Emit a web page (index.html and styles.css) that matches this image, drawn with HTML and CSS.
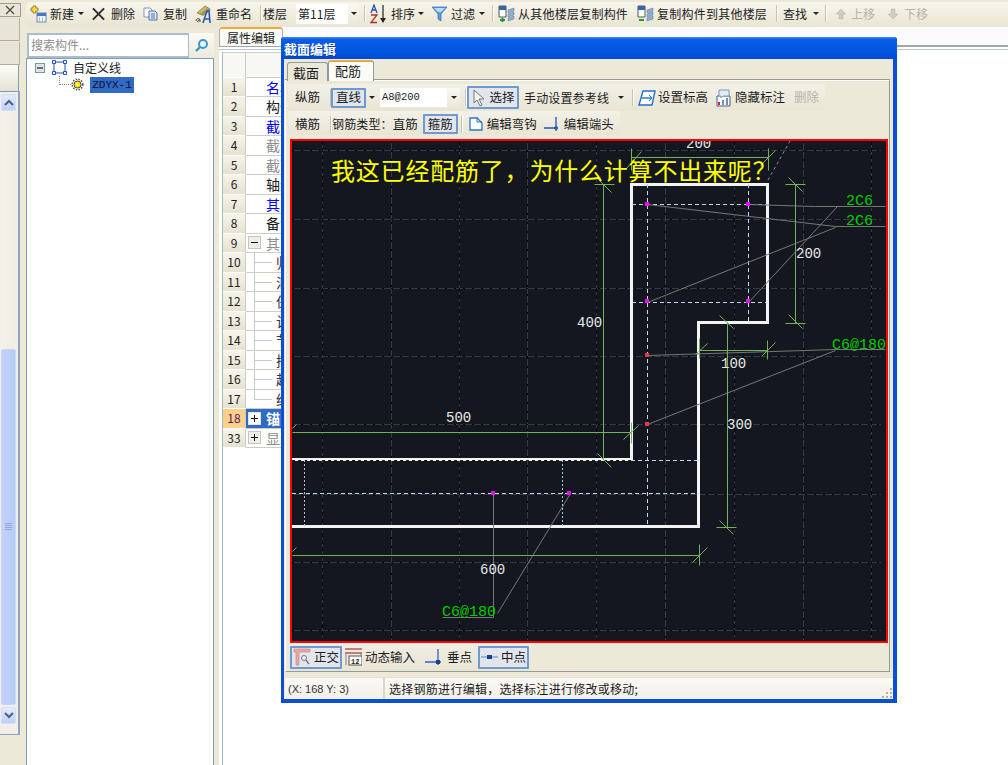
FILE: index.html
```html
<!DOCTYPE html>
<html lang="zh-CN">
<head>
<meta charset="utf-8">
<title>截面编辑</title>
<link rel="stylesheet" href="styles.css">
</head>
<body>
<div class="app">
  <aside class="rail">
    <div class="close-tile"><svg width="10" height="10" viewBox="0 0 10 10"><path d="M1 1l8 8M9 1l-8 8" stroke="#444" stroke-width="1.1"/></svg></div>
    <div class="rail-tile"></div>
    <div class="rail-tile"></div>
    <div class="rail-head"></div>
    <div class="rail-list">
      <div class="sb-btn"><svg width="10" height="7" viewBox="0 0 10 7"><path d="M1 6l4-4 4 4" fill="none" stroke="#4d6185" stroke-width="2"/></svg></div>
      <div class="sb-track">
        <div class="sb-thumb"><svg width="7" height="8" viewBox="0 0 7 8"><path d="M0 .5h7M0 2.5h7M0 4.5h7M0 6.5h7" stroke="#8fa8e0"/></svg></div>
      </div>
      <div class="sb-btn"><svg width="10" height="7" viewBox="0 0 10 7"><path d="M1 1l4 4 4-4" fill="none" stroke="#4d6185" stroke-width="2"/></svg></div>
    </div>
  </aside>

  <main class="main">
    <div class="toolbar">
      <svg class="ic m0" width="17" height="18" viewBox="0 0 17 18"><path d="M3 1h3v2h2v3H6v2H3V6H1V3h2z" fill="#f6d84a" stroke="#8c7420" stroke-width=".8"/><rect x="7" y="8" width="9" height="9" fill="#eef3fb" stroke="#6d88b8"/><rect x="7" y="8" width="9" height="3" fill="#4b78c0"/><path d="M9 13h1M12 13h1M9 15h1M12 15h1" stroke="#7a8aa8"/></svg>
      <span class="m3">新建</span><i class="caret m4"></i>
      <svg class="ic m8" width="13" height="14" viewBox="0 0 14 14"><path d="M1 1l12 12M13 1L1 13" stroke="#2b2b2b" stroke-width="2.1"/></svg>
      <span class="m6">删除</span>
      <svg class="ic m8" width="15" height="14" viewBox="0 0 15 14"><path d="M1 1h6l2 2v7H1z" fill="#fff" stroke="#7e93b8"/><path d="M6 4h6l2 2v7H6z" fill="#dfe9f8" stroke="#4f73ad"/><path d="M8 7h4M8 9h4M8 11h4" stroke="#4f73ad"/></svg>
      <span class="m5">复制</span>
      <svg class="ic m8" width="18" height="20" viewBox="0 0 18 20"><path d="M2 9l8-7 5 3-8 6z" fill="#d8b45c" stroke="#7d6a36" stroke-width=".7"/><path d="M5 10l8-6 3 2-8 6z" fill="#8a9a70"/><path d="M1 17c0-3 4-3 4-1v2M5 16c-2-.5-3.500 2-1.500 2" fill="none" stroke="#444"/><path d="M8 19l4-12h2l1 12M10 15h4" fill="none" stroke="#2a55b0" stroke-width="1.600"/></svg>
      <span class="m3">重命名</span>
      <i class="sep m8"></i>
      <span class="m2">楼层</span>
      <div class="combo combo-floor"><span class="combo-val">第11层</span><span class="drop"><i class="caret"></i></span></div>
      <i class="sep m5"></i>
      <svg class="ic m5" width="18" height="20" viewBox="0 0 18 20"><path d="M1 9l3-8 3 8M2.500 6h3" fill="none" stroke="#2a55b0" stroke-width="1.300"/><path d="M1 11h6L1 18.500h6" fill="none" stroke="#b03030" stroke-width="1.300"/><path d="M13 1v15" stroke="#222" stroke-width="1.2"/><path d="M10 14l3 5 3-5z" fill="#222"/></svg>
      <span class="m3">排序</span><i class="caret m3"></i>
      <svg class="ic m8" width="15" height="15" viewBox="0 0 15 15"><path d="M0 1h15L9 8v7l-3-2V8z" fill="#5b9be0" stroke="#3269ad" stroke-width=".7"/><path d="M2 2h11L9 6H6z" fill="#bcdcf8"/></svg>
      <span class="m4">过滤</span><i class="caret m4"></i>
      <i class="sep m7"></i>
      <svg class="ic m5" width="17" height="18" viewBox="0 0 17 18"><path d="M1 1h7v11H1z" fill="#fff" stroke="#555"/><rect x="1" y="1" width="7" height="4" fill="#3a64a8"/><path d="M10 5l6-2v3l-6 2zM10 9l6-2v3l-6 2zM10 13l6-2v3l-6 2z" fill="#8fb0cf" stroke="#5b7b9c" stroke-width=".5"/><path d="M2 15h5M4.500 13v4" stroke="#1e9a35" stroke-width="2"/></svg>
      <span class="m3 wide">从其他楼层复制构件</span>
      <svg class="ic m9" width="17" height="18" viewBox="0 0 17 18"><path d="M1 1h7v11H1z" fill="#fff" stroke="#555"/><rect x="1" y="1" width="7" height="4" fill="#3a64a8"/><path d="M10 5l6-2v3l-6 2zM10 9l6-2v3l-6 2zM10 13l6-2v3l-6 2z" fill="#8fb0cf" stroke="#5b7b9c" stroke-width=".5"/><path d="M2 15h5" stroke="#1e9a35" stroke-width="2"/></svg>
      <span class="m3 wide">复制构件到其他楼层</span>
      <i class="sep m9"></i>
      <span class="m6">查找</span><i class="caret m6"></i>
      <i class="sep m6"></i>
      <svg class="ic m9" width="12" height="12" viewBox="0 0 12 12"><path d="M6 1l5 5H8v5H4V6H1z" fill="#cfcdc2" stroke="#bdbbb0" stroke-width=".6"/></svg>
      <span class="m4 muted">上移</span>
      <svg class="ic m12" width="12" height="12" viewBox="0 0 12 12"><path d="M6 11L1 6h3V1h4v5h3z" fill="#cfcdc2" stroke="#bdbbb0" stroke-width=".6"/></svg>
      <span class="m5 muted">下移</span>
    </div>

    <div class="workspace">
      <section class="nav">
        <div class="search">
          <div class="search-input">搜索构件...</div>
          <div class="search-btn"><svg width="15" height="15" viewBox="0 0 15 15"><circle cx="9" cy="6" r="4" fill="#e6f4fb" stroke="#3d94cc" stroke-width="2"/><path d="M6 9l-4 4" stroke="#3d94cc" stroke-width="2.400"/></svg></div>
        </div>
        <div class="tree">
          <div class="tree-row">
            <svg class="tree-box" width="10" height="10" viewBox="0 0 10 10"><rect x=".5" y=".5" width="9" height="9" fill="#dfe3e6" stroke="#8095a8"/><path d="M2 5h6" stroke="#223" stroke-width="1.200"/></svg>
            <svg class="tree-ic" width="15" height="15" viewBox="0 0 15 15"><rect x="2" y="2" width="11" height="11" fill="none" stroke="#1b50c0"/><path d="M.5.500h3v3h-3zM11.500.500h3v3h-3zM.5 11.500h3v3h-3zM11.500 11.500h3v3h-3z" fill="#fff" stroke="#1b50c0"/></svg>
            <span class="tree-label">自定义线</span>
          </div>
          <div class="tree-row tree-child">
            <i class="tree-hook"></i>
            <svg class="tree-gear" width="13" height="13" viewBox="0 0 13 13"><circle cx="6.500" cy="6.500" r="3.500" fill="#ffe900" stroke="#444"/><circle cx="6.500" cy="6.500" r="5.300" fill="none" stroke="#555" stroke-width="1.600" stroke-dasharray="1.500 1.300"/><circle cx="6.500" cy="6.500" r="1.300" fill="#fff7a0"/></svg>
            <span class="tree-sel">ZDYX-1</span>
          </div>
        </div>
      </section>

      <section class="props">
        <div class="tabstrip"><div class="prop-tab">属性编辑</div></div>
        <div class="grid">
          <div class="gh top"></div><div class="gc top"></div>
          <div class="gh">1</div><div class="gc blue">名称</div>
          <div class="gh">2</div><div class="gc">构件</div>
          <div class="gh">3</div><div class="gc blue">截面</div>
          <div class="gh">4</div><div class="gc gray">截面</div>
          <div class="gh">5</div><div class="gc gray">截面</div>
          <div class="gh">6</div><div class="gc">轴线</div>
          <div class="gh">7</div><div class="gc blue">其它</div>
          <div class="gh">8</div><div class="gc">备注</div>
          <div class="gh">9</div><div class="gc gray boxed"><i class="pm minus"></i><span class="pm-t">其它</span></div>
          <div class="gh">10</div><div class="gc kid">归</div>
          <div class="gh">11</div><div class="gc kid">汇</div>
          <div class="gh">12</div><div class="gc kid">保</div>
          <div class="gh">13</div><div class="gc kid">计</div>
          <div class="gh">14</div><div class="gc kid">节</div>
          <div class="gh">15</div><div class="gc kid">搭</div>
          <div class="gh">16</div><div class="gc kid">起</div>
          <div class="gh">17</div><div class="gc kid last">终</div>
          <div class="gh hot">18</div><div class="gc sel boxed"><i class="pm plus"></i><span class="pm-t">锚固</span></div>
          <div class="gh">33</div><div class="gc gray boxed"><i class="pm plus"></i><span class="pm-t">显示</span></div>
        </div>
      </section>
    </div>
  </main>
</div>

<div class="dialog">
  <div class="titlebar">截面编辑</div>
  <div class="tabs">
    <div class="tab">截面</div>
    <div class="tab active">配筋</div>
  </div>
  <div class="panel">
    <div class="dbar bar1">
      <span class="m7">纵筋</span>
      <i class="sep m10"></i>
      <span class="press btn-line">直线</span><i class="caret m3"></i>
      <div class="combo combo-rebar"><span class="mono-val">A8@200</span><span class="drop"><i class="caret"></i></span></div>
      <i class="sep m5"></i>
      <span class="press btn-select m1"><svg class="ic" width="14" height="18" viewBox="0 0 14 18"><path d="M2 1v13l3-3 3 6 2-1-3-6h5z" fill="#f4f4f4" stroke="#777"/></svg><span class="m4">选择</span></span>
      <span class="m5 tight">手动设置参考线</span><i class="caret m9"></i>
      <i class="sep m8"></i>
      <svg class="ic m5" width="18" height="16" viewBox="0 0 18 16"><path d="M5 1h12l-3 14H1z" fill="#fff" stroke="#1f6fd0" stroke-width="1.400"/><path d="M4 8h9" stroke="#1f6fd0" stroke-width="1.400"/><path d="M11 5l3 3-3 3" fill="none" stroke="#1f6fd0"/></svg>
      <span class="m2">设置标高</span>
      <svg class="ic m8" width="15" height="18" viewBox="0 0 15 18"><path d="M1 7h13v10H1z" fill="#fff" stroke="#3c5f95"/><path d="M3 1h10v6H7L5 9V7H3z" fill="#e3ecf7" stroke="#7d97bd"/><path d="M3 16v-3" stroke="#d22" stroke-width="2"/><path d="M7 16v-5M11 16V9" stroke="#3c5f95" stroke-width="1.400"/></svg>
      <span class="m4">隐藏标注</span>
      <span class="m9 muted">删除</span>
    </div>
    <div class="dbar bar2">
      <span class="m7">横筋</span>
      <i class="sep m10"></i>
      <span class="m1 tight">钢筋类型：</span>
      <span class="m0">直筋</span>
      <span class="press btn-hoop m5">箍筋</span>
      <i class="sep m3"></i>
      <svg class="ic m6" width="16" height="16" viewBox="0 0 16 16"><path d="M2 2h7l5 5v7H2z" fill="#fff" stroke="#2e73c9" stroke-width="1.300"/><path d="M9 1v5h5" fill="none" stroke="#2e73c9"/></svg>
      <span class="m3">编辑弯钩</span>
      <svg class="ic m7" width="16" height="16" viewBox="0 0 16 16"><path d="M0 12h14" stroke="#1f56b8" stroke-width="1.500"/><path d="M12 1v14" stroke="#1f56b8" stroke-width="1.300"/><rect x="10.500" y="10.500" width="3" height="3" fill="#1f56b8"/></svg>
      <span class="m4">编辑端头</span>
    </div>

    <div class="cad">
      <svg class="cad-svg" width="594" height="500" viewBox="292 141 594 500">
        <g class="g-base">
          <path d="M292 150H881M292 219H881M292 288H881M292 356H881M292 424H881M292 494H881M292 562H881M292 630H881"/>
          <path d="M322 141V640M391 141V640M459 141V640M527 141V640M596 141V640M665 141V640M734 141V640M803 141V640M871 141V640"/>
        </g>
        <g class="g-dash">
          <path d="M292 150H881M292 219H881M292 288H881M292 356H881M292 424H881M292 494H881M292 562H881M292 630H881"/>
          <path d="M391 141V640M527 141V640M665 141V640M803 141V640"/>
        </g>
        <g class="g-dash2">
          <path d="M322 141V640M459 141V640M596 141V640M734 141V640M871 141V640"/>
        </g>

        <path class="shape" d="M292 526.500H698.500V322.500H767V184.500H631.500V459.500H292"/>
        <path class="shape-dash" d="M292 460H631"/>

        <path class="rebar" d="M647 184V527M748 184V322M632 204H767M632 302H767M631 460H699M292 493H699"/>
        <path class="rebar-dk" d="M304 460V527M562 460V527"/>

        <path class="lead" d="M647 204L835 226H885M748 204L815 206H885M647 302L835 227M748 302L837 206M647 355L835 349H885M647 424L835 350M493 493V617H442M570 493L497 613"/>

        <g class="dim">
          <path d="M631 157H768M631 148V170M626 168L641 151M768 148V170M760 165L775 150"/>
          <path d="M795 184V323M785 184H805M788 177L802 191M785 323H805M788 314L802 328"/>
          <path d="M603 184V460M594 184H614M596 177L611 192M597 453L611 467"/>
          <path d="M292 432H631M631 422V443M623 439L638 425M292 428L296 424"/>
          <path d="M699 350H767M699 338V358M695 354L707 343M767 340V359M761 356L775 342"/>
          <path d="M727 322V527M719 315L733 328M716 527H736M719 520L733 534"/>
          <path d="M292 555H699M699 544V565M692 562L707 547M292 551L296 547"/>
        </g>
        <path class="dash-grey" d="M768 180L790 141"/>

        <g class="sq-m">
          <rect x="645" y="202" width="4" height="4"/><rect x="746" y="202" width="4" height="4"/>
          <rect x="645" y="299" width="4" height="4"/><rect x="746" y="299" width="4" height="4"/>
          <rect x="491" y="491" width="4" height="4"/><rect x="567" y="491" width="4" height="4"/>
        </g>
        <g class="sq-r"><rect x="645" y="353" width="4" height="4"/><rect x="645" y="422" width="4" height="4"/></g>

        <text class="q" x="331" y="180">我这已经配筋了，为什么计算不出来呢？</text>
        <text class="num" x="686" y="148">200</text>
        <text class="num" x="796" y="258">200</text>
        <text class="num" x="577" y="327">400</text>
        <text class="num" x="721" y="368">100</text>
        <text class="num" x="727" y="429">300</text>
        <text class="num" x="446" y="422">500</text>
        <text class="num" x="480" y="574">600</text>
        <text class="lbl" x="846" y="205">2C6</text>
        <text class="lbl" x="846" y="225">2C6</text>
        <text class="lbl" x="832" y="349">C6@180</text>
        <text class="lbl" x="442" y="616">C6@180</text>
      </svg>
    </div>

    <div class="dbar bar3">
      <span class="press btn-ortho m1"><svg class="ic" width="18" height="18" viewBox="0 0 18 18"><path d="M1 1h16v3H6v13H3V4H1z" fill="#e8a8a0" stroke="#c98078" stroke-width=".6"/><circle cx="11" cy="10" r="2.500" fill="#eef" stroke="#778"/><path d="M13 12l3 4" stroke="#778" stroke-width="1.400"/></svg><span class="m3">正交</span></span>
      <svg class="ic m3" width="17" height="18" viewBox="0 0 17 18"><path d="M0 1h17M0 5h17" stroke="#b05a5a" stroke-width="1.300"/><path d="M1 5v12M16 5v3" stroke="#888"/><rect x="4" y="8" width="13" height="9" fill="#fff" stroke="#555"/><text x="6" y="16" class="ic-n">12</text></svg>
      <span class="m3">动态输入</span>
      <svg class="ic m10" width="17" height="18" viewBox="0 0 17 18"><path d="M0 14h16" stroke="#2a66c2" stroke-width="1.500"/><path d="M13 1v16" stroke="#2a66c2" stroke-width="1.300"/><rect x="11" y="12" width="4" height="4" fill="#1a3f96"/></svg>
      <span class="m5">垂点</span>
      <span class="press btn-mid m6"><svg class="ic" width="17" height="8" viewBox="0 0 17 8"><path d="M0 4h17" stroke="#6b9ad8" stroke-width="1.200"/><rect x="6" y="2" width="5" height="4" fill="#1a3f96"/></svg><span class="m3">中点</span></span>
    </div>
  </div>

  <div class="status">
    <div class="st-pos">(X: 168 Y: 3)</div>
    <div class="st-msg">选择钢筋进行编辑，选择标注进行修改或移动;</div>
    <svg class="grip" width="12" height="12" viewBox="0 0 12 12"><path d="M9 1h2v2H9zM5 5h2v2H5zM9 5h2v2H9zM1 9h2v2H1zM5 9h2v2H5zM9 9h2v2H9z" fill="#b5b2a3"/></svg>
  </div>
</div>
</body>
</html>
```
FILE: styles.css
```css
* { box-sizing: border-box; }
html, body { margin: 0; height: 100%; overflow: hidden; }
body {
  background: #ece9d8;
  color: #1c1c1c;
  font: 12px/1 "Noto Sans CJK SC", "Liberation Sans", sans-serif;
}
i { display: block; font-style: normal; }
svg { display: block; flex: none; }

.app { display: flex; height: 765px; }

/* margins between toolbar items */
.m0 { margin-left: 0; } .m1 { margin-left: 1px; } .m2 { margin-left: 2px; } .m3 { margin-left: 3px; }
.m4 { margin-left: 4px; } .m5 { margin-left: 5px; } .m6 { margin-left: 6px; } .m7 { margin-left: 7px; }
.m8 { margin-left: 8px; } .m9 { margin-left: 9px; } .m10 { margin-left: 10px; } .m12 { margin-left: 12px; }
.wide { letter-spacing: .22px; }
.muted { color: #b5b3a8; }
.caret { width: 0; height: 0; flex: none; border: 3px solid transparent; border-top: 3px solid #222; border-bottom: 0; }
.sep { width: 1px; height: 17px; flex: none; background: #c5c2b2; box-shadow: 1px 0 #fff; }

/* left rail */
.rail { width: 26px; flex: none; display: flex; flex-direction: column; padding: 3px 0 30px; }
.close-tile { width: 21px; height: 14px; border: 1px solid #a09e92; border-left: 0; background: #e9e6d8; display: flex; align-items: center; justify-content: center; }
.rail-tile { width: 20px; height: 23px; margin-top: 1px; background: #e8e5d6; border-right: 1px solid #b5b3a5; border-bottom: 1px solid #aeac9e; }
.rail-head { width: 19px; height: 26px; background: linear-gradient(#fdfcf8, #e6e3d6); border-right: 1px solid #8a9cb2; }
.rail-list { width: 20px; flex: 1; display: flex; flex-direction: column; padding: 2px 2px 10px 1px; background: #f1efe8; border-top: 1px solid #7f9db9; border-right: 2px solid #8ea5bd; border-bottom: 1px solid #8ea5bd; }
.sb-btn { width: 15px; height: 17px; flex: none; background: linear-gradient(#e3ebfd, #bdd0f8); border: 1px solid #d3def7; border-radius: 2px; display: flex; align-items: center; justify-content: center; }
.sb-track { flex: 1; display: flex; flex-direction: column; justify-content: flex-end; padding-bottom: 2px; background: linear-gradient(90deg, #f3f1ea, #efede4); }
.sb-thumb { height: 356px; width: 15px; background: linear-gradient(90deg, #c1d2f7, #b5cbf7); border: 1px solid #c8d7f8; border-radius: 2px; display: flex; align-items: center; justify-content: center; }

/* main area */
.main { flex: 1; min-width: 0; display: flex; flex-direction: column; }
.toolbar { height: 27px; flex: none; display: flex; align-items: center; padding: 0 0 2px 4px; background: linear-gradient(#f7f5ec, #e9e5d3); border-top: 2px solid #ece9d8; border-radius: 5px 0 0 5px; white-space: nowrap; }
.combo { display: flex; align-items: stretch; background: #fff; flex: none; }
.combo-floor { width: 63px; height: 20px; margin-left: 9px; }
.combo-val { flex: 1; padding: 4px 0 0 2px; }
.drop { width: 11px; flex: none; display: flex; align-items: center; justify-content: center; background: linear-gradient(#f9f8f1, #ebe8da); }

.workspace { flex: 1; min-height: 0; display: flex; }
.nav { width: 188px; flex: none; display: flex; flex-direction: column; padding-top: 6px; }
.search { height: 25px; flex: none; display: flex; }
.search-input { width: 162px; margin-left: 1px; padding: 3px 0 0 2px; background: #fff; border: 2px solid #a9bdcf; border-right-width: 1px; color: #8d8d8d; font-size: 12px; line-height: 14px; }
.search-btn { flex: 1; display: flex; align-items: center; justify-content: center; background: linear-gradient(#fafaf5, #ece9dc); }
.tree { flex: 1; background: #fff; border: 1px solid #7f9db9; border-bottom: 0; }
.tree-row { height: 17px; display: flex; align-items: center; position: relative; }
.tree-box { margin-left: 8px; }
.tree-ic { margin-left: 7px; }
.tree-label { margin-left: 6px; font-size: 12px; }
.tree-child { height: 17px; }
.tree-hook { margin-left: 32px; width: 12px; height: 9px; margin-top: -9px; border-left: 1px dotted #888; border-bottom: 1px dotted #888; }
.tree-sel { margin-left: 6px; width: 44px; height: 16px; padding-top: 3px; text-align: center; background: #316ac5; color: #0b1030; font: 11px/1 "Liberation Mono", monospace; }

.props { flex: 1; margin-left: 5px; min-width: 0; display: flex; flex-direction: column; background: #fff; }
.tabstrip { height: 20px; flex: none; display: flex; background: #fbfbfe; border-bottom: 2px solid #9ea8ad; box-shadow: 0 2px 0 #fff, 0 3px 0 #b7c2c9; }
.prop-tab { width: 64px; height: 19px; padding-top: 3px; text-align: center; background: #fbfbf8; border: 1px solid #a5b0b8; border-top: 2px solid #f0a43c; border-bottom: 0; border-radius: 3px 3px 0 0; }
.grid { flex: 1; width: 90px; margin: 5px 0 0 3px; display: grid; grid-template-columns: 23px 1fr; grid-template-rows: 25.500px repeat(19, 19.500px); align-content: start; border-left: 1px solid #a7b6c2; }
.gh { background: linear-gradient(#f6f4ea, #e6e2d1); border-right: 1px solid #cfcdc2; border-bottom: 1px solid #fff; display: flex; align-items: center; justify-content: center; font-size: 12px; color: #222; }
.gh.top, .gc.top { background: #f8f8f3; border-top: 1px solid #c9ced2; }
.gc { border-bottom: 1px solid #cfcdc2; display: flex; align-items: center; padding-left: 20px; overflow: hidden; font-size: 14px; white-space: nowrap; position: relative; color: #1c1c1c; }
.gc.blue { color: #0000f0; }
.gc.gray { color: #8d8d8d; }
.gc.boxed { padding-left: 2px; }
.gh.hot { background: #fbd08a; color: #5a1560; }
.gc.sel { background: #316ac5; color: #fff; font-weight: 700; }
.pm { width: 13px; height: 13px; flex: none; background: #f0efe8; border: 1px solid #c6c6c0; position: relative; }
.sel .pm { background: #fff; border-color: #dfe5f2; }
.pm::before { content: ""; position: absolute; left: 2px; right: 2px; top: 5px; height: 1px; background: #111; }
.plus::after { content: ""; position: absolute; top: 2px; bottom: 2px; left: 5px; width: 1px; background: #111; }
.pm-t { margin-left: 5px; }
.gc.kid { padding-left: 30px; color: #333; }
.kid::before { content: ""; position: absolute; left: 8px; top: 0; bottom: 0; width: 1px; background: #c8c8c8; }
.kid.last::before { bottom: 50%; }
.kid::after { content: ""; position: absolute; left: 8px; width: 18px; top: 50%; height: 1px; background: #c8c8c8; }

/* dialog window */
.dialog { position: absolute; left: 281px; top: 37px; width: 616px; height: 666px; background: #ece9d8; border: solid #0a4fd8; border-width: 0 4px 4px 3px; border-radius: 3px 3px 0 0; display: flex; flex-direction: column; }
.titlebar { height: 22px; flex: none; margin: 0 -4px 0 -3px; padding: 5px 0 0 3px; border-radius: 3px 3px 0 0; background: linear-gradient(180deg, #3d8cf0 0, #0a5ce6 12%, #0056e0 70%, #0048d0 100%); color: #fff; font-size: 13px; font-weight: 700; text-shadow: 1px 1px 0 #0a3fa8; }
.tabs { height: 21px; flex: none; margin: 1px 0 -1px 3px; display: flex; align-items: flex-end; position: relative; z-index: 1; }
.tab { width: 41px; height: 19px; padding: 3px 0 0 5px; font-size: 13px; background: #ebe8da; border: 1px solid #919b9c; border-bottom: 0; border-radius: 3px 3px 0 0; }
.tab.active { width: 46px; height: 21px; background: #fbfbf8; border-top: 2px solid #f0a43c; padding: 2px 0 0 6px; }
.panel { height: 592px; flex: none; margin: 0 3px 0 1px; padding: 3px 0 0 2px; border: 1px solid #919b9c; border-color: #fff #919b9c #919b9c #fff; box-shadow: 0 -1px 0 #919b9c; display: flex; flex-direction: column; }
.dbar { display: flex; align-items: center; flex: none; white-space: nowrap; font-size: 12.500px; }
.tight { font-size: 12px; letter-spacing: .15px; }
.bar1 { height: 27px; width: 537px; background: linear-gradient(#f3f1e7, #e8e5d4); border-radius: 3px; }
.bar2 { height: 24px; width: 332px; padding-top: 2px; background: linear-gradient(#f3f1e7, #e8e5d4); border-radius: 3px; }
.bar3 { height: 28px; width: 243px; margin-left: 1px; background: linear-gradient(#f0eee2, #e8e5d4); }
.press { display: flex; align-items: center; justify-content: center; flex: none; background: #e2e6ec; border: 2px solid #6e9ad0; height: 20px; border-radius: 1px; }
.btn-line { width: 35px; }
.btn-select { width: 52px; height: 23px; }
.btn-hoop { width: 35px; }
.btn-ortho { width: 52px; height: 23px; }
.btn-mid { width: 51px; height: 23px; }
.combo-rebar { width: 80px; height: 19px; margin-left: 5px; }
.mono-val { flex: 1; padding: 4px 0 0 2px; font: 10.500px/1 "Liberation Mono", monospace; }
.combo-rebar .drop { width: 13px; }
.cad { width: 598px; height: 504px; flex: none; margin: 4px 0 0 2px; border: 2px solid #f00; background: #14171f; overflow: hidden; }
.cad-svg { shape-rendering: crispEdges; }
.g-base path { fill: none; stroke: #323b47; stroke-width: 1; }
.g-dash path { fill: none; stroke: #05060a; stroke-width: 1; stroke-dasharray: 2 7; }
.g-dash2 path { fill: none; stroke: #040508; stroke-width: 1; stroke-dasharray: 4 3; }
.shape { fill: none; stroke: #f4f4f4; stroke-width: 3; }
.shape-dash { fill: none; stroke: #222; stroke-width: 1; stroke-dasharray: 3 3; }
.rebar { fill: none; stroke: #bcd8f2; stroke-width: 1; stroke-dasharray: 4 3; }
.rebar-dk { fill: none; stroke: #a9c6e0; stroke-width: 1; stroke-dasharray: 2 2; }
.lead { fill: none; stroke: #777; stroke-width: 1; shape-rendering: geometricPrecision; transform: translate(.5px, .5px); }
.dim path { fill: none; stroke: #6fb35a; stroke-width: 1; shape-rendering: geometricPrecision; transform: translate(.5px, .5px); }
.dash-grey { fill: none; stroke: #8a8a8a; stroke-width: 1; stroke-dasharray: 3 3; shape-rendering: geometricPrecision; }
.sq-m rect { fill: #f0f; }
.sq-r rect { fill: #e8384f; }
.q { fill: #ff0; font: 24px "Noto Sans CJK SC", sans-serif; letter-spacing: .8px; }
.num { fill: #e8e8e8; font: 14px "Liberation Mono", monospace; }
.lbl { fill: #0c0; font: 15px "Liberation Mono", monospace; }
.ic-n { font: 700 7px "Liberation Mono", monospace; fill: #222; }

.status { height: 22px; flex: none; margin: 5px 0 0 1px; display: flex; align-items: center; background: linear-gradient(#fbfaf5, #f1efe6); border-top: 1px solid #e4e1d2; position: relative; }
.st-pos { width: 100px; height: 100%; flex: none; padding: 6px 0 0 3px; font: 11px/1 "Liberation Sans", sans-serif; color: #333; border-right: 2px solid #dbd8c9; }
.st-msg { margin-left: 4px; font-size: 12px; letter-spacing: .28px; }
.grip { position: absolute; right: 0; bottom: 0; }
```
